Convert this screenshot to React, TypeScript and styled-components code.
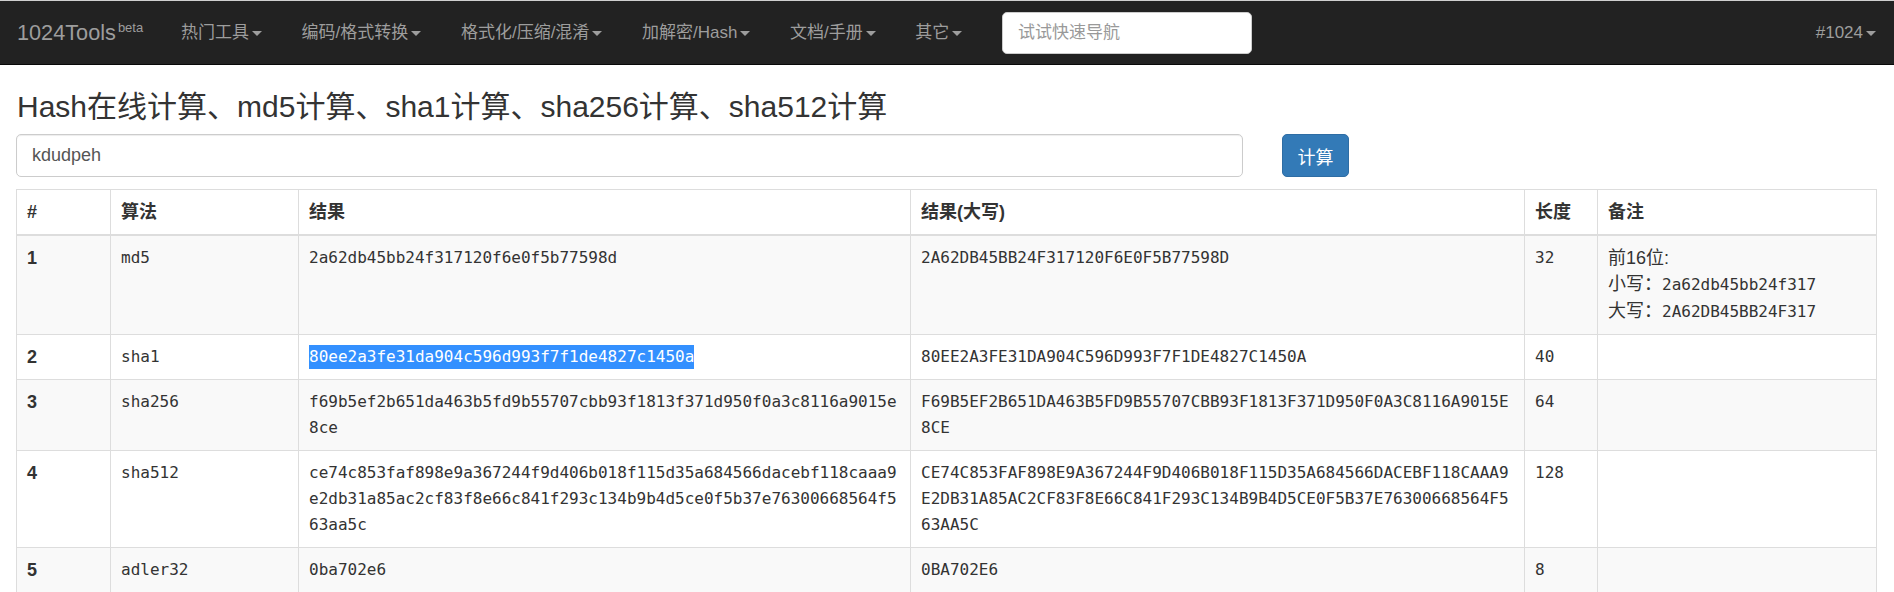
import React from 'react';
import styled, { createGlobalStyle } from 'styled-components';

const GlobalStyle = createGlobalStyle`
  * { box-sizing: border-box; }
  html, body { margin: 0; padding: 0; background: #fff; }
  body {
    font-family: "Liberation Sans", Arial, "Noto Sans CJK SC", sans-serif;
    font-size: 18px;
    line-height: 26px;
    color: #333;
  }
`;

const SANS = `"Liberation Sans", Arial, "Noto Sans CJK SC", sans-serif`;
const MONO = `"DejaVu Sans Mono", "Liberation Mono", "Noto Sans CJK SC", monospace`;

const Navbar = styled.nav`
  display: flex;
  align-items: center;
  height: 65px;
  padding-left: 17px;
  background: #222;
  border-top: 1px solid #cfcfcf;
  border-bottom: 1px solid #080808;
  font-size: 17px;
  line-height: 20px;
  color: #9d9d9d;
`;

const Brand = styled.a`
  flex: 0 0 145px;
  font-size: 21.7px;
  line-height: 24px;
  color: #9d9d9d;
  text-decoration: none;
  white-space: nowrap;
`;

const Beta = styled.span`
  font-size: 13px;
  line-height: 1;
  margin-left: 2px;
  vertical-align: 8px;
`;

const NavList = styled.ul`
  display: flex;
  align-items: center;
  margin: 0;
  padding: 0;
  list-style: none;
`;

const NavLink = styled.li<{ $right?: boolean }>`
  display: flex;
  align-items: center;
  padding: ${(p) => (p.$right ? '0 18px 0 0' : '0 19.8px')};
  margin-left: ${(p) => (p.$right ? 'auto' : '0')};
  white-space: nowrap;
  color: #9d9d9d;
  cursor: pointer;
  &:first-child { padding-left: 19px; }
`;

const Caret = styled.span`
  display: inline-block;
  width: 0;
  height: 0;
  margin-left: 3px;
  border-top: 5px solid #9d9d9d;
  border-left: 5px solid transparent;
  border-right: 5px solid transparent;
  transform: translateY(1px);
`;

const SearchBox = styled.input`
  width: 250px;
  height: 42px;
  margin-left: 20px;
  padding: 0 15px;
  border: 1px solid #ccc;
  border-radius: 5px;
  background: #fff;
  font-family: ${SANS};
  font-size: 17px;
  color: #555;
  outline: none;
  &::placeholder { color: #999; }
`;

const Page = styled.main`
  padding: 0 18px 0 16px;
`;

const Title = styled.h1`
  margin: 25px 0 11px 1px;
  font-family: ${SANS};
  font-size: 30px;
  line-height: 33px;
  font-weight: 400;
  color: #333;
`;

const FormRow = styled.div`
  display: flex;
  align-items: stretch;
  gap: 39px;
  height: 43px;
`;

const TextInput = styled.input`
  flex: 0 0 1227px;
  height: 43px;
  padding: 0 15px;
  border: 1px solid #ccc;
  border-radius: 5px;
  box-shadow: inset 0 1px 1px rgba(0, 0, 0, 0.075);
  font-family: ${SANS};
  font-size: 18px;
  color: #555;
  outline: none;
`;

const PrimaryButton = styled.button`
  width: 67px;
  height: 43px;
  padding: 0;
  border: 1px solid #2e6da4;
  border-radius: 5px;
  background: #337ab7;
  color: #fff;
  font-family: ${SANS};
  font-size: 18px;
  cursor: pointer;
`;

const Table = styled.table`
  width: 1860px;
  margin-top: 12px;
  border-collapse: collapse;
  table-layout: fixed;
`;

const HeadCell = styled.th`
  padding: 9px 10px;
  border: 1px solid #ddd;
  border-bottom: 2px solid #ddd;
  text-align: left;
  vertical-align: bottom;
  font-family: ${SANS};
  font-weight: 700;
  font-size: 18px;
  line-height: 26px;
`;

const Row = styled.tr<{ $striped: boolean }>`
  background: ${(p) => (p.$striped ? '#f9f9f9' : '#fff')};
`;

const Cell = styled.td<{ $mono?: boolean; $bold?: boolean }>`
  padding: 9px 10px;
  border: 1px solid #ddd;
  vertical-align: top;
  text-align: left;
  font-family: ${(p) => (p.$mono ? MONO : SANS)};
  font-size: ${(p) => (p.$mono ? '16px' : '18px')};
  font-weight: ${(p) => (p.$bold ? 700 : 400)};
  line-height: 26px;
  word-break: break-all;
`;

const Mono = styled.span`
  font-family: ${MONO};
  font-size: 16px;
`;

const NoteLine = styled.div`
  white-space: nowrap;
`;

const Selected = styled.span`
  display: inline-block;
  vertical-align: top;
  margin-top: 1px;
  line-height: 24px;
  background: #3390ff;
  color: #fff;
`;

const rows = [
  { id: 1, algo: 'md5', value: '2a62db45bb24f317120f6e0f5b77598d', note: true },
  { id: 2, algo: 'sha1', value: '80ee2a3fe31da904c596d993f7f1de4827c1450a', selected: true },
  { id: 3, algo: 'sha256', value: 'f69b5ef2b651da463b5fd9b55707cbb93f1813f371d950f0a3c8116a9015e8ce' },
  {
    id: 4,
    algo: 'sha512',
    value:
      'ce74c853faf898e9a367244f9d406b018f115d35a684566dacebf118caaa9e2db31a85ac2cf83f8e66c841f293c134b9b4d5ce0f5b37e76300668564f563aa5c',
  },
  { id: 5, algo: 'adler32', value: '0ba702e6' },
];

const navItems = ['热门工具', '编码/格式转换', '格式化/压缩/混淆', '加解密/Hash', '文档/手册', '其它'];

export default function App() {
  return (
    <>
      <GlobalStyle />
      <Navbar>
        <Brand>
          1024Tools<Beta>beta</Beta>
        </Brand>
        <NavList>
          {navItems.map((item) => (
            <NavLink key={item}>
              {item}
              <Caret />
            </NavLink>
          ))}
        </NavList>
        <SearchBox placeholder="试试快速导航" />
        <NavLink $right>
          #1024
          <Caret />
        </NavLink>
      </Navbar>
      <Page>
        <Title>Hash在线计算、md5计算、sha1计算、sha256计算、sha512计算</Title>
        <FormRow>
          <TextInput defaultValue="kdudpeh" />
          <PrimaryButton>计算</PrimaryButton>
        </FormRow>
        <Table>
          <colgroup>
            <col style={{ width: 94 }} />
            <col style={{ width: 188 }} />
            <col style={{ width: 612 }} />
            <col style={{ width: 614 }} />
            <col style={{ width: 73 }} />
            <col style={{ width: 279 }} />
          </colgroup>
          <thead>
            <tr>
              <HeadCell>#</HeadCell>
              <HeadCell>算法</HeadCell>
              <HeadCell>结果</HeadCell>
              <HeadCell>结果(大写)</HeadCell>
              <HeadCell>长度</HeadCell>
              <HeadCell>备注</HeadCell>
            </tr>
          </thead>
          <tbody>
            {rows.map((r, i) => (
              <Row key={r.id} $striped={i % 2 === 0}>
                <Cell $bold>{r.id}</Cell>
                <Cell $mono>{r.algo}</Cell>
                <Cell $mono>{r.selected ? <Selected>{r.value}</Selected> : r.value}</Cell>
                <Cell $mono>{r.value.toUpperCase()}</Cell>
                <Cell $mono>{r.value.length}</Cell>
                <Cell>
                  {r.note && (
                    <>
                      <NoteLine>前16位:</NoteLine>
                      <NoteLine>
                        小写：<Mono>{r.value.slice(0, 16)}</Mono>
                      </NoteLine>
                      <NoteLine>
                        大写：<Mono>{r.value.slice(0, 16).toUpperCase()}</Mono>
                      </NoteLine>
                    </>
                  )}
                </Cell>
              </Row>
            ))}
          </tbody>
        </Table>
      </Page>
    </>
  );
}
